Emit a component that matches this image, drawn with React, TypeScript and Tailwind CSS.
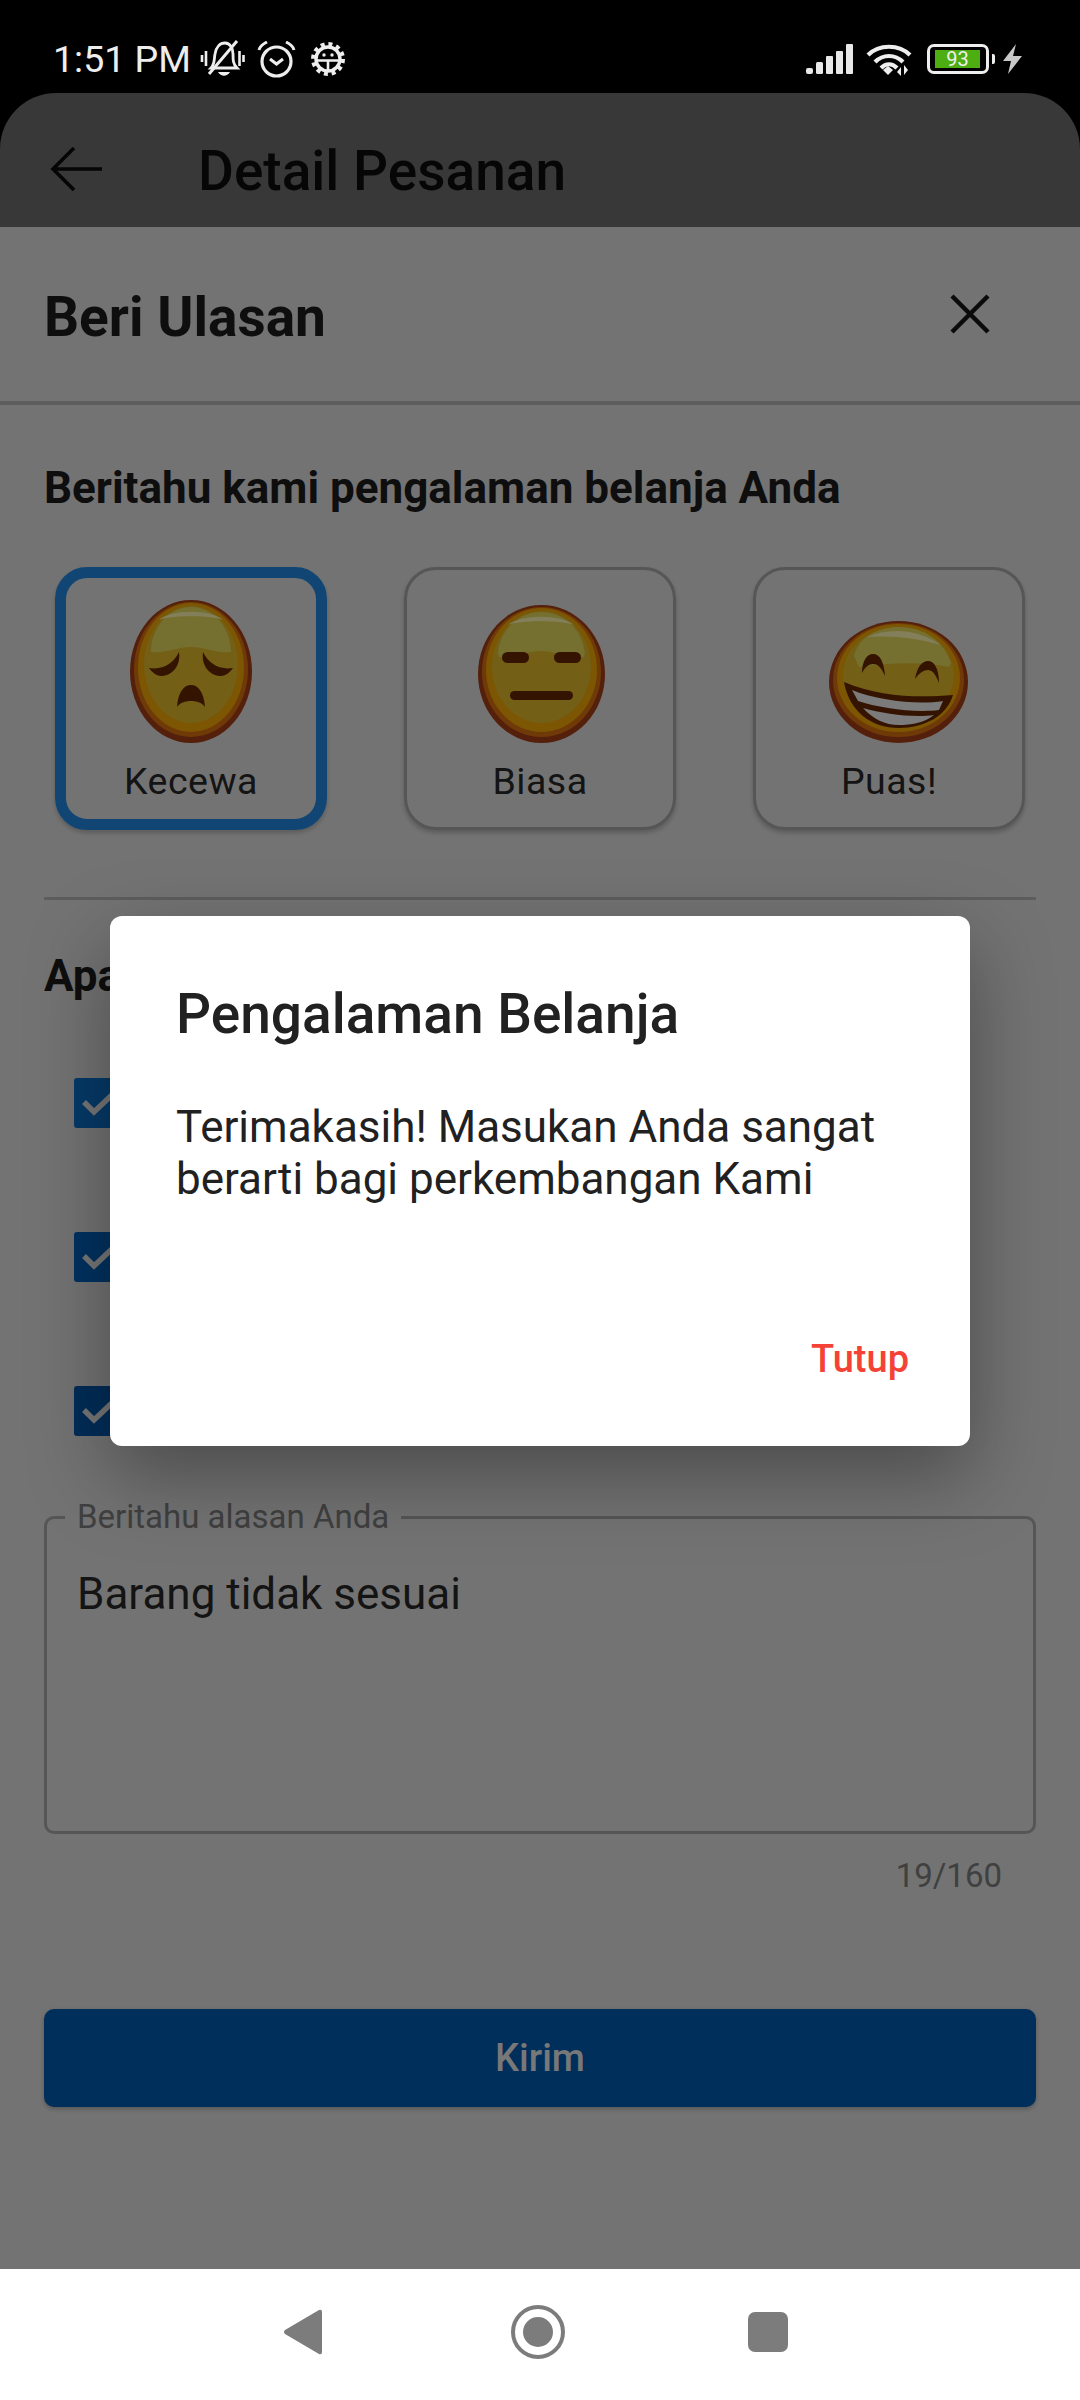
import React from "react";

const roboto = { fontFamily: "Roboto, 'Noto Sans', sans-serif" };

function Face({ w, h, children }: { w: number; h: number; children: React.ReactNode }) {
  const rx = w / 2;
  const ry = h / 2;
  return (
    <svg width={w} height={h} viewBox={`0 0 ${w} ${h}`}>
      <ellipse cx={rx} cy={ry} rx={rx} ry={ry} fill="#54200c" />
      <ellipse cx={rx} cy={ry - 2} rx={rx - 4} ry={ry - 4} fill="#703a08" />
      <ellipse cx={rx} cy={ry - 4} rx={rx - 8} ry={ry - 7} fill="#7c5603" />
      <ellipse cx={rx} cy={ry - 7} rx={rx - 14} ry={ry - 13} fill="#745f16" />
      {children}
    </svg>
  );
}

function Sad() {
  return (
    <Face w={122} h={143}>
      <path d="M21 50 C22 26 40 7 61 7 C82 7 100 26 101 50 L101 52 C88 54 75 47 61 47 C47 47 34 54 21 52 Z" fill="#75702f" />
      <path d="M29 20 C40 9 82 9 93 20 C82 15 40 15 29 20 Z" fill="#827f5a" />
      <path d="M19 68 C33 70 43 64 49 52 C51 66 42 76 31 76 C26 76 22 72 19 68 Z" fill="#341400" />
      <path d="M103 68 C89 70 79 64 73 52 C71 66 80 76 91 76 C96 76 100 72 103 68 Z" fill="#341400" />
      <path d="M47 107 C48 92 54 85 61 85 C68 85 74 92 75 107 C70 99 52 99 47 107 Z" fill="#341400" />
    </Face>
  );
}

function Neutral() {
  return (
    <Face w={127} h={138}>
      <path d="M20 48 C22 24 42 7 63 7 C86 7 104 24 107 48 L106 52 C90 54 78 46 63 46 C48 46 36 54 21 52 Z" fill="#75702f" />
      <path d="M30 20 C42 9 84 9 96 20 C84 15 42 15 30 20 Z" fill="#827f5a" />
      <rect x="24" y="47" width="27" height="11" rx="5.5" fill="#341400" />
      <rect x="76" y="47" width="27" height="11" rx="5.5" fill="#341400" />
      <rect x="32" y="86" width="63" height="9" rx="4.5" fill="#341400" />
    </Face>
  );
}

function Happy() {
  return (
    <Face w={139} h={122}>
      <path d="M25 35 C30 15 50 6 70 6 C95 6 115 20 122 42 L120 46 C90 40 60 42 30 46 Z" fill="#75702f" />
      <path d="M38 16 C60 6 90 8 112 24 C90 17 60 14 38 16 Z" fill="#827f5a" />
      <path d="M33 52 C33 40 38 33 44 33 C51 33 55 41 56 55 C52 46 49 43 44 43 C40 43 36 46 33 52 Z" fill="#341400" />
      <path d="M86 58 C88 46 93 40 99 40 C105 40 110 47 110 62 C106 52 103 49 99 49 C95 49 90 52 86 58 Z" fill="#341400" />
      <path d="M15 61 C50 76 90 77 124 74 C118 95 95 107 70 107 C42 107 20 90 15 61 Z" fill="#341400" />
      <path d="M23 69 C50 80 90 84 114 80 L110 89 C85 92 50 87 29 80 Z" fill="#7b7b7b" />
      <path d="M34 87 C55 93 85 97 105 94 C95 102 82 104 70 104 C56 104 44 98 34 87 Z" fill="#7b7b7b" />
    </Face>
  );
}

function Mood({ label, active, children }: { label: string; active?: boolean; children: React.ReactNode }) {
  return (
    <div
      className={`w-[272px] h-[263px] rounded-[32px] flex flex-col items-center justify-end shadow-[0_3px_4px_rgba(0,0,0,0.2)] ${
        active ? "border-[11px] border-[#114674] pb-[16px]" : "border-[3px] border-[#565656] pb-[24px]"
      }`}
    >
      {children}
      <span className="text-[37.5px] leading-[44px] tracking-[0.5px] text-[#141414] mt-[16px]" style={roboto}>
        {label}
      </span>
    </div>
  );
}

function Check({ color }: { color: string }) {
  return (
    <div className="w-[50px] h-[50px] rounded-[3px] flex items-center justify-center" style={{ background: color }}>
      <svg width="40" height="40" viewBox="0 0 40 40">
        <path d="M5 19 L15 29 L34 11" fill="none" stroke="#777777" strokeWidth="5.5" />
      </svg>
    </div>
  );
}

function StatusLeftIcons() {
  return (
    <div className="flex items-center ml-[9px]">
      <svg width="45" height="38" viewBox="0 0 45 38" fill="none" stroke="#eeeeee" strokeWidth="2.8">
        <path d="M11 28 C15 24 14 19 15 14 C16 7 20 3 25 3 C30 3 33 8 33 14 C33 20 33 24 37 28 Z" />
        <path d="M37 1 L9 34" strokeWidth="3" />
        <path d="M18 32 C21 37 27 37 30 32 Z" fill="#eeeeee" stroke="none" />
        <path d="M2 15 V22 M6 11 V26 M39.5 11 V26 M43.5 15 V22" strokeWidth="2.6" />
      </svg>
      <svg className="ml-[12px]" width="39" height="37" viewBox="0 0 39 37" fill="none" stroke="#eeeeee">
        <circle cx="19.5" cy="20.5" r="14.5" strokeWidth="3.2" />
        <path d="M13 18 L19.5 23 L26 18" strokeWidth="3" />
        <path d="M2 9 C3 5 6 3 10 1 M37 9 C36 5 33 3 29 1" strokeWidth="3" />
      </svg>
      <svg className="ml-[15px]" width="34" height="34" viewBox="0 0 34 34">
        <circle cx="17" cy="17" r="12" fill="none" stroke="#eeeeee" strokeWidth="3.4" />
        <circle cx="17" cy="17" r="15" fill="none" stroke="#eeeeee" strokeWidth="4" strokeDasharray="4 3.85" />
        <path d="M5 18.5 H29 M17 18.5 V28" stroke="#eeeeee" strokeWidth="2.6" />
        <circle cx="13" cy="13" r="1.7" fill="#eeeeee" />
        <circle cx="21" cy="13" r="1.7" fill="#eeeeee" />
      </svg>
    </div>
  );
}

function StatusRightIcons() {
  return (
    <div className="flex items-center">
      <svg width="47" height="30" viewBox="0 0 47 30" fill="#e8e8e8">
        <rect x="0" y="24" width="7" height="6" rx="2" />
        <rect x="10" y="18" width="7" height="12" rx="1.5" />
        <rect x="20" y="12" width="7" height="18" rx="1" />
        <rect x="30" y="7" width="7" height="23" rx="1" />
        <rect x="40" y="0" width="7" height="30" rx="1" />
      </svg>
      <svg className="ml-[13px]" width="46" height="33" viewBox="0 0 46 33" fill="none" stroke="#eeeeee" strokeWidth="4.2">
        <path d="M2 12 C13 1 33 1 44 12" />
        <path d="M9 19 C17 11 29 11 37 19" />
        <path d="M15 25 C20 20 26 20 31 25" />
        <path d="M17 27 L22 23 L27 27 L22 32 Z" fill="#eeeeee" stroke="none" />
        <path d="M35 24 L31 29 L35 33 Z M38 22 L42 27 L38 32 Z" fill="#eeeeee" stroke="none" />
      </svg>
      <div className="ml-[15px] w-[62px] h-[30px] border-[3px] border-[#eeeeee] rounded-[7px] flex items-center justify-start pl-[5px]">
        <div className="w-[45px] h-[18px] bg-[#4cae10] flex items-center justify-center">
          <span className="text-[20px] leading-[18px] text-[#f0f0f0]" style={roboto}>93</span>
        </div>
      </div>
      <div className="ml-[3px] w-[3px] h-[10px] bg-[#eeeeee] rounded-r-[2px]" />
      <svg className="ml-[8px]" width="19" height="30" viewBox="0 0 19 30">
        <path d="M13 0 L0 17 H8 L5 30 L19 12 H10 Z" fill="#c8c8c8" />
      </svg>
    </div>
  );
}

export default function App() {
  return (
    <div className="relative w-[1080px] h-[2400px] overflow-hidden bg-black flex flex-col" style={roboto}>
      {/* status bar */}
      <div className="h-[93px] shrink-0 flex items-center justify-between pl-[53px] pr-[58px] pt-[25px]">
        <div className="flex items-center">
          <span className="text-[37.5px] leading-[40px] text-[#eeeeee]">1:51 PM</span>
          <StatusLeftIcons />
        </div>
        <StatusRightIcons />
      </div>

      {/* app bar */}
      <div className="h-[134px] shrink-0 bg-[#383838] rounded-t-[56px] flex items-center pl-[50px] pt-[18px]">
        <svg width="52" height="44" viewBox="0 0 52 44" fill="none" stroke="#050505" strokeWidth="3.6">
          <path d="M52 22 H3 M24 1 L3 22 L24 43" />
        </svg>
        <span className="ml-[96px] text-[55px] leading-[60px] font-medium text-[#060606] relative top-[2px]">Detail Pesanan</span>
      </div>

      {/* body */}
      <div className="flex-1 bg-[#737373] flex flex-col">
        <div className="h-[178px] shrink-0 border-b-[4px] border-[#5d5d5d] flex items-center justify-between pl-[44px] pr-[90px]">
          <span className="text-[55px] leading-[60px] font-bold text-[#0e0e0e] relative top-[3px]">Beri Ulasan</span>
          <svg width="40" height="40" viewBox="0 0 40 40" stroke="#0b0b0b" strokeWidth="4.5">
            <path d="M2 2 L38 38 M38 2 L2 38" />
          </svg>
        </div>

        <div className="px-[44px]">
          <h2 className="mt-[58px] text-[44px] leading-[50px] font-bold text-[#0e0e0e]">
            Beritahu kami pengalaman belanja Anda
          </h2>

          <div className="mt-[54px] pl-[11px] pr-[11px] flex justify-between">
            <Mood label="Kecewa" active><Sad /></Mood>
            <Mood label="Biasa"><div className="ml-[3px] leading-[0]"><Neutral /></div></Mood>
            <Mood label="Puas!"><div className="ml-[18px] leading-[0]"><Happy /></div></Mood>
          </div>

          <div className="mt-[67px] h-[3px] bg-[#5d5d5d]" />

          <h3 className="mt-[51px] text-[44px] leading-[50px] font-bold text-[#0e0e0e]">Apa</h3>

          <div className="mt-[77px] pl-[30px] flex flex-col gap-[104px]">
            <Check color="#053a68" />
            <Check color="#013260" />
            <Check color="#012d58" />
          </div>

          <div className="relative mt-[80px] h-[318px] border-[3px] border-[#565656] rounded-[10px] px-[30px] pt-[50px]">
            <span className="absolute left-[18px] top-[-22px] bg-[#737373] px-[12px] text-[33px] leading-[40px] text-[#404040]">
              Beritahu alasan Anda
            </span>
            <span className="block text-[44px] leading-[50px] text-[#141414]">Barang tidak sesuai</span>
          </div>

          <div className="mt-[22px] pr-[34px] text-right text-[33px] leading-[40px] text-[#404040]">19/160</div>

          <div className="mt-[113px] h-[98px] bg-[#012f5c] rounded-[10px] flex items-center justify-center shadow-[0_2px_4px_rgba(0,0,0,0.25)]">
            <span className="text-[38px] leading-[44px] font-medium text-[#787878]">Kirim</span>
          </div>
        </div>
      </div>

      {/* nav bar */}
      <div className="h-[131px] shrink-0 bg-white flex items-center justify-center pb-[5px] pr-[11px]">
        <svg width="40" height="48" viewBox="0 0 40 48">
          <path d="M37 2 L3 22 Q1 24 3 26 L37 46 Q40 47 40 44 V4 Q40 1 37 2 Z" fill="#7c7c7c" />
        </svg>
        <svg className="ml-[189px]" width="54" height="54" viewBox="0 0 54 54">
          <circle cx="27" cy="27" r="25" fill="none" stroke="#7c7c7c" strokeWidth="4" />
          <circle cx="27" cy="27" r="15" fill="#7c7c7c" />
        </svg>
        <div className="ml-[183px] w-[40px] h-[40px] rounded-[7px] bg-[#7c7c7c]" />
      </div>

      {/* dialog */}
      <div className="absolute left-[110px] top-[916px] w-[860px] h-[530px] bg-white rounded-[12px] shadow-[0_30px_80px_rgba(0,0,0,0.35)] flex flex-col">
        <h1 className="mt-[67px] ml-[66px] text-[55px] leading-[62px] font-medium text-[#212121]">Pengalaman Belanja</h1>
        <p className="mt-[56px] ml-[66px] text-[44px] leading-[52px] text-[#212121]">
          Terimakasih! Masukan Anda sangat
          <br />
          berarti bagi perkembangan Kami
        </p>
        <div className="mt-auto mb-[65px] mr-[61px] text-right text-[38px] leading-[44px] font-medium text-[#f44336]">Tutup</div>
      </div>
    </div>
  );
}
